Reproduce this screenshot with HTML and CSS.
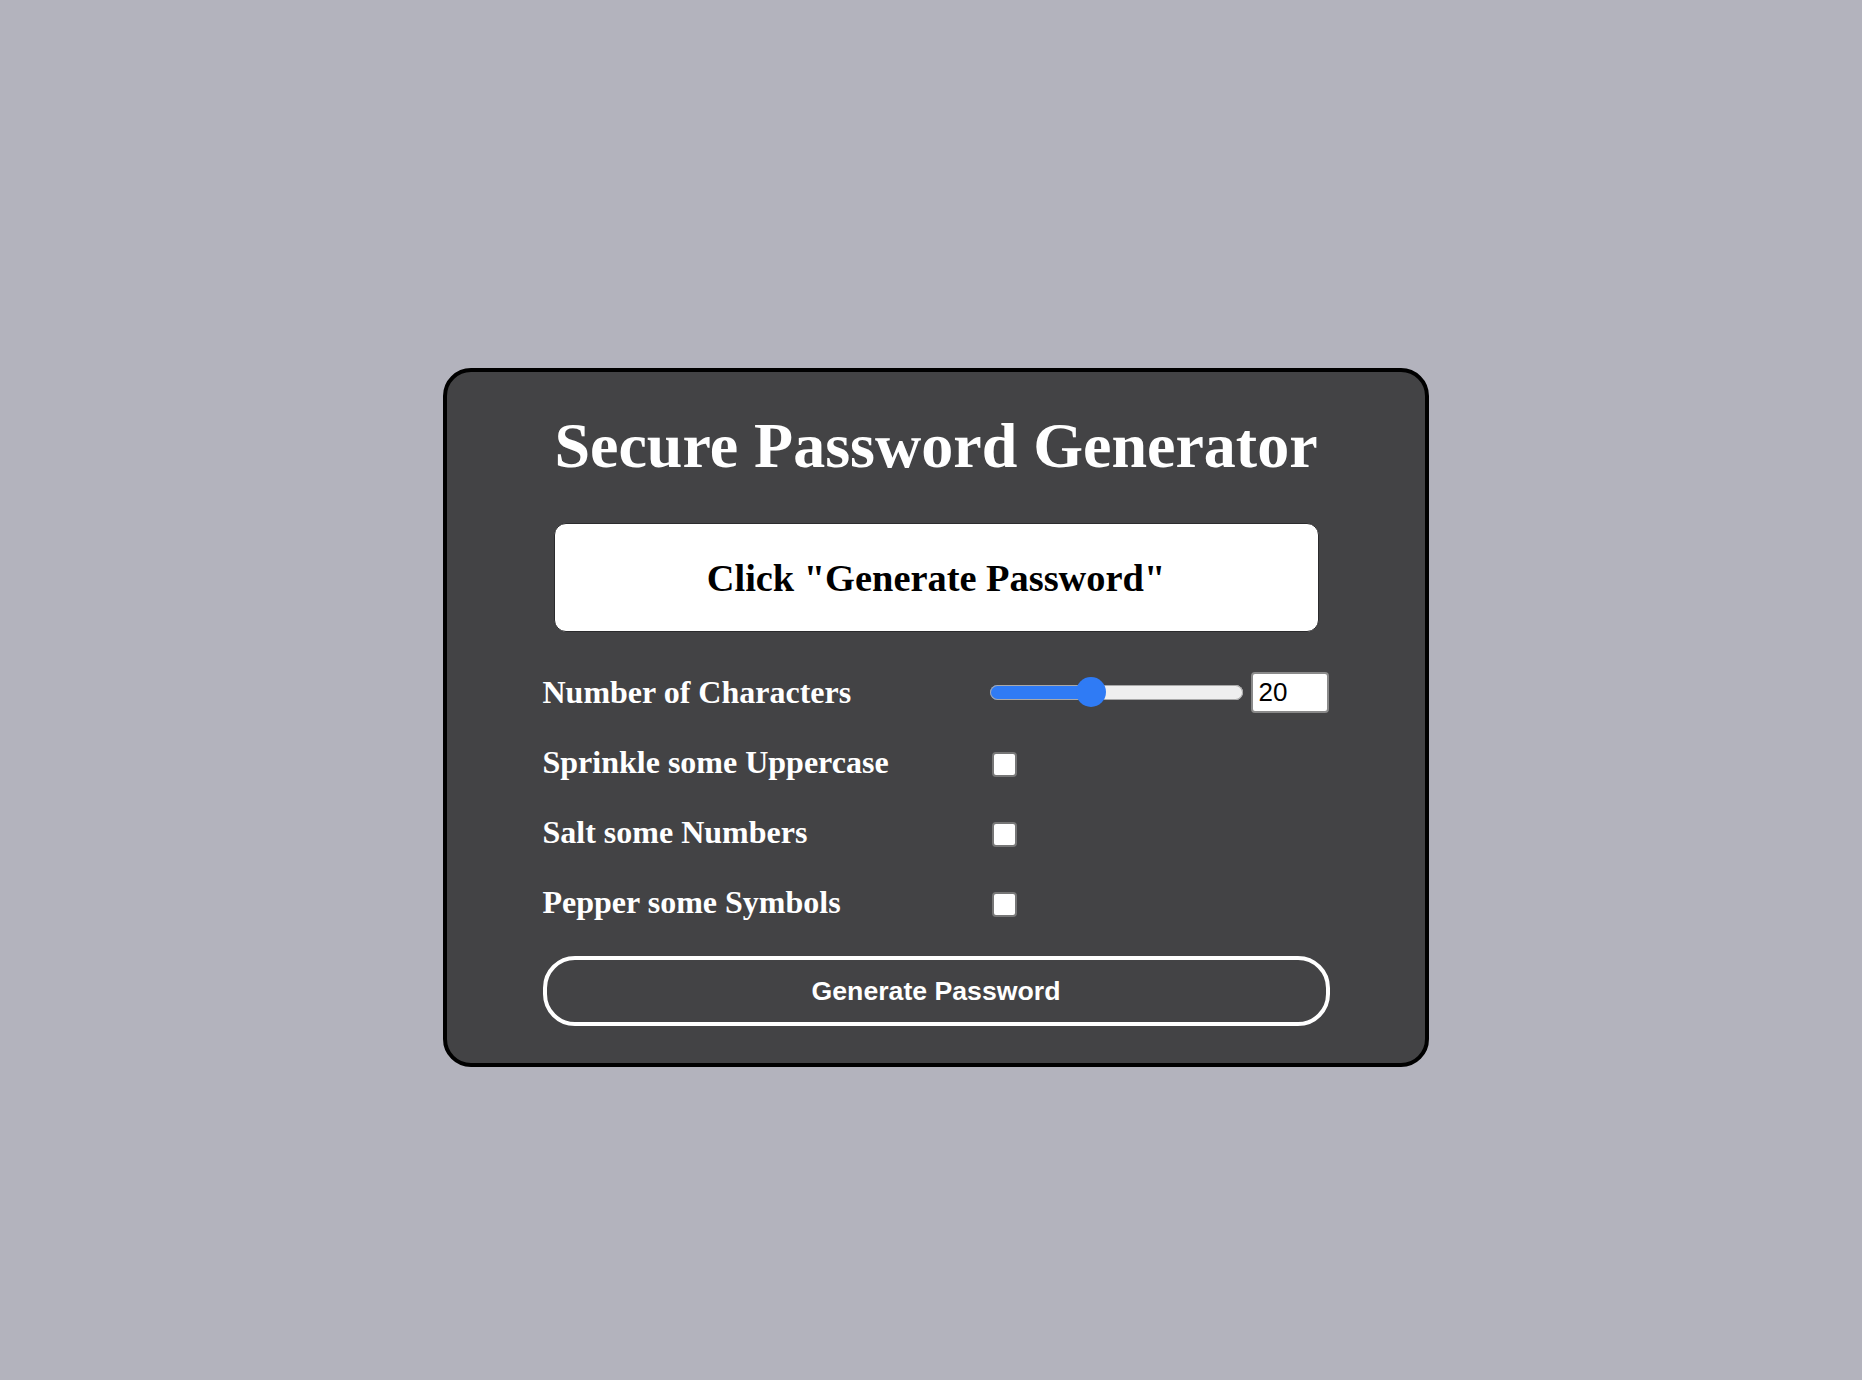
FILE: index.html
```html
<!DOCTYPE html>
<html lang="en">
<head>
    <meta charset="UTF-8">
    <meta name="viewport" content="width=device-width, initial-scale=1.0">
    <title>Secure Password Generator</title>
    <link rel="stylesheet" href="styles.css">
</head>
<body>

<div class="page">
    <div class="card">
        <h1 class="title">Secure Password Generator</h1>

        <!-- Password output -->
        <div class="output" id="password">Click "Generate Password"</div>

        <!-- Options -->
        <div class="options">
            <label class="opt-label" for="length">Number of Characters</label>
            <div class="opt-control">
                <input type="range" class="slider" id="length" min="1" max="50" value="20" style="--fill: 40.5%">
                <input type="number" class="count" id="lengthNum" min="1" max="50" value="20">
            </div>

            <label class="opt-label" for="upper">Sprinkle some Uppercase</label>
            <div class="opt-control">
                <input type="checkbox" class="check" id="upper">
            </div>

            <label class="opt-label" for="numbers">Salt some Numbers</label>
            <div class="opt-control">
                <input type="checkbox" class="check" id="numbers">
            </div>

            <label class="opt-label" for="symbols">Pepper some Symbols</label>
            <div class="opt-control">
                <input type="checkbox" class="check" id="symbols">
            </div>
        </div>

        <button class="generate" id="generate">Generate Password</button>
    </div>
</div>

</body>
</html>
```

FILE: styles.css
```css
body {
    margin: 0;
    padding: 0;
    background: #b3b3bd;
    font-family: "Liberation Serif", "Times New Roman", serif;
}
.page {
    min-height: 100vh;
    box-sizing: border-box;
    padding: 55px 0 0 10px;
    display: flex;
    justify-content: center;
    align-items: center;
}
.card {
    width: 986px;
    box-sizing: border-box;
    background: #434345;
    border: 4px solid #000;
    border-radius: 28px;
    padding: 37px 0;
}
.title {
    margin: 0;
    color: #fff;
    font-size: 64px;
    line-height: 74px;
    font-weight: bold;
    text-align: center;
}
.output {
    width: 765px;
    height: 109px;
    box-sizing: border-box;
    margin: 40px auto 0;
    background: #fff;
    border: 1px solid #2b2b2d;
    border-radius: 12px;
    display: flex;
    align-items: center;
    justify-content: center;
    color: #000;
    font-size: 38.4px;
    font-weight: bold;
}
.options {
    width: 787px;
    margin: 25px auto 0;
    display: grid;
    grid-template-columns: 447px 340px;
    grid-auto-rows: 70px;
    align-items: center;
}
.opt-label {
    color: #fff;
    font-size: 32px;
    font-weight: bold;
}
.opt-control {
    display: flex;
    align-items: center;
    gap: 8px;
}
.slider {
    -webkit-appearance: none;
    appearance: none;
    width: 253px;
    height: 30px;
    margin: 0;
    background: transparent;
}
.slider::-webkit-slider-runnable-track {
    height: 15px;
    border-radius: 8px;
    background: linear-gradient(to right, #2f7bf5 var(--fill), #efefef var(--fill));
    box-shadow: inset 0 0 0 1px #a9a9a9;
}
.slider::-webkit-slider-thumb {
    -webkit-appearance: none;
    width: 30px;
    height: 30px;
    margin-top: -7.5px;
    border-radius: 50%;
    background: #2f7bf5;
    border: none;
}
.count {
    width: 78px;
    height: 41px;
    box-sizing: border-box;
    margin: 0;
    padding: 0 6px;
    border: 2px solid #8a8a8a;
    border-radius: 4px;
    background: #fff;
    font-family: "Liberation Sans", Arial, sans-serif;
    font-size: 26px;
    color: #000;
}
.check {
    -webkit-appearance: none;
    appearance: none;
    width: 25px;
    height: 25px;
    margin: 4px 0 0 2px;
    background: #fff;
    border: 2px solid #767676;
    border-radius: 4px;
}
.generate {
    display: block;
    width: 787px;
    height: 70px;
    box-sizing: border-box;
    margin: 19px auto 0;
    background: transparent;
    border: 4px solid #fff;
    border-radius: 32px;
    color: #fff;
    font-family: "Liberation Sans", Arial, sans-serif;
    font-size: 26.67px;
    font-weight: bold;
    cursor: pointer;
}
```
